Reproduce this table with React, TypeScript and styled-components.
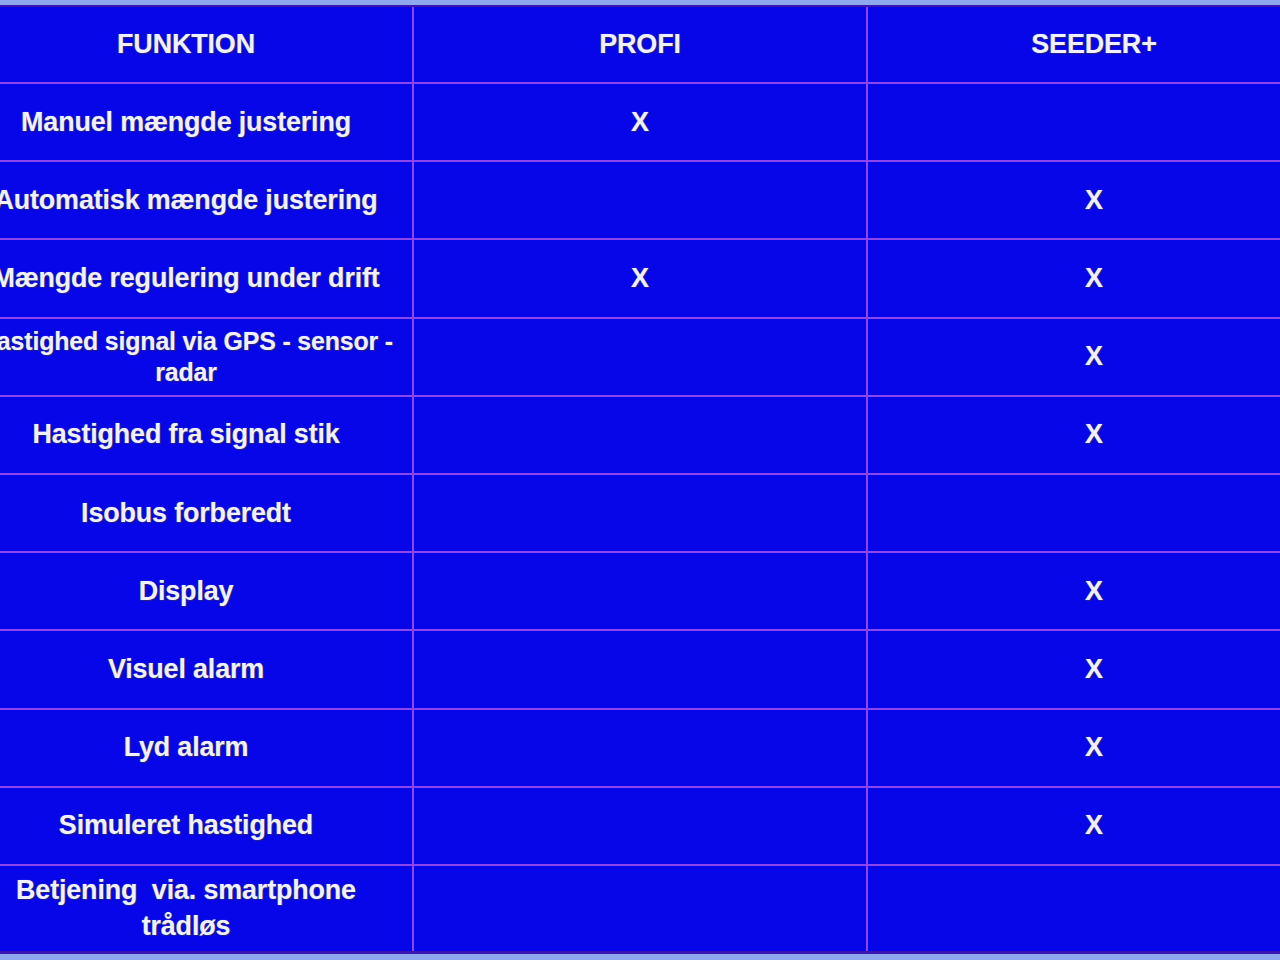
import React from "react";
import styled, { createGlobalStyle } from "styled-components";

const Global = createGlobalStyle`
  html, body {
    margin: 0;
    padding: 0;
    background: #8ea8ee;
    overflow: hidden;
  }
  body {
    font-family: "Liberation Sans", Arial, sans-serif;
  }
`;

const Page = styled.div`
  width: 1280px;
  height: 960px;
  padding-top: 5px;
  box-sizing: border-box;
  overflow: hidden;
`;

const Table = styled.div`
  margin-left: -40px;
  width: 1360px;
  display: grid;
  grid-template-columns: 452px 452px 452px;
  grid-template-rows: 75px repeat(10, 76.2px) 85px;
  column-gap: 2px;
  row-gap: 2px;
  background: #8c46ee;
  border-top: 2px solid #3a16b0;
  border-bottom: 3px solid #3a16b0;
`;

const Cell = styled.div<{ $loose?: boolean; $small?: boolean }>`
  background: #0606e8;
  display: flex;
  align-items: center;
  justify-content: center;
  text-align: center;
  padding: 0 ${(p) => (p.$small ? "4px" : "14px")};
  box-sizing: border-box;
  color: #f0f0ff;
  font-weight: bold;
  font-size: ${(p) => (p.$small ? "25px" : "27px")};
  line-height: ${(p) => (p.$loose ? "36px" : "31px")};
  letter-spacing: -0.2px;
  text-shadow: 1px 1px 1px rgba(40, 40, 110, 0.95), 0 0 1px rgba(200, 200, 255, 0.6);
`;

type Row = { label: string; profi: boolean; seeder: boolean; loose?: boolean; small?: boolean };

const rows: Row[] = [
  { label: "Manuel mængde justering", profi: true, seeder: false },
  { label: "Automatisk mængde justering", profi: false, seeder: true },
  { label: "Mængde regulering under drift", profi: true, seeder: true },
  { label: "Hastighed signal via GPS - sensor - radar", profi: false, seeder: true, small: true },
  { label: "Hastighed fra signal stik", profi: false, seeder: true },
  { label: "Isobus forberedt", profi: false, seeder: false },
  { label: "Display", profi: false, seeder: true },
  { label: "Visuel alarm", profi: false, seeder: true },
  { label: "Lyd alarm", profi: false, seeder: true },
  { label: "Simuleret hastighed", profi: false, seeder: true },
  { label: "Betjening\u00a0 via. smartphone trådløs", profi: false, seeder: false, loose: true },
];

export default function App() {
  return (
    <Page>
      <Global />
      <Table>
        <Cell>FUNKTION</Cell>
        <Cell>PROFI</Cell>
        <Cell>SEEDER+</Cell>
        {rows.map((r) => (
          <React.Fragment key={r.label}>
            <Cell $loose={r.loose} $small={r.small}>{r.label}</Cell>
            <Cell>{r.profi ? "X" : ""}</Cell>
            <Cell>{r.seeder ? "X" : ""}</Cell>
          </React.Fragment>
        ))}
      </Table>
    </Page>
  );
}
